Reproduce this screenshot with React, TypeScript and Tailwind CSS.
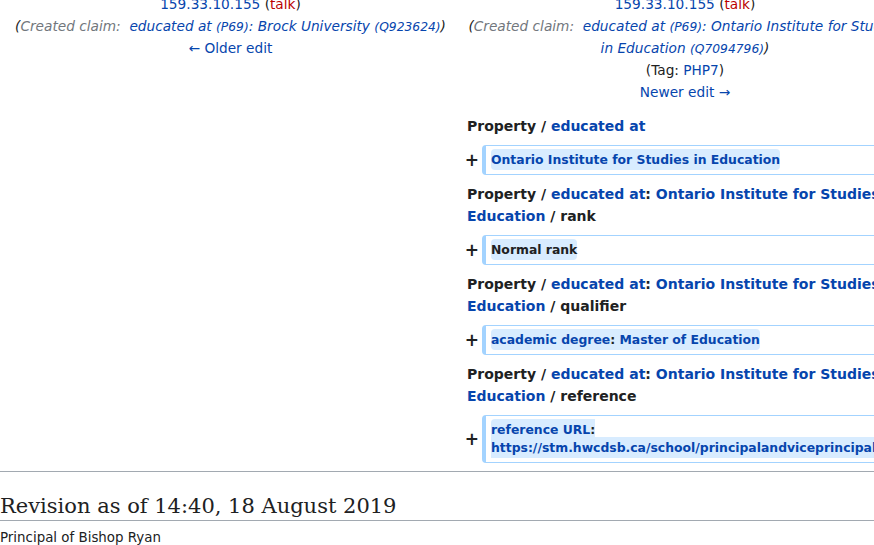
const link = "text-[#0645ad]";

const Id = ({ children }: { children: string }) => (
  <span className="text-[12.3px] leading-none">({children})</span>
);

const HeaderCell = ({ right }: { right?: boolean }) => {
  return (
    <div className="text-center text-[13.7px] leading-[22px]">
      <div>
        <a className={link}>159.33.10.155</a> (<a className="text-[#ba0000]">talk</a>)
      </div>
      <div className="italic">
        (<span className="whitespace-pre text-[#72777d]">Created claim:  </span>
        <a className={link}>
          educated at <Id>P69</Id>:{" "}
          {right ? "Ontario Institute for Studies in Education" : "Brock University"}{" "}
          <Id>{right ? "Q7094796" : "Q923624"}</Id>
        </a>
        )
      </div>
      {right ? (
        <>
          <div>
            (Tag: <a className={link}>PHP7</a>)
          </div>
          <div>
            <a className={link}>Newer edit →</a>
          </div>
        </>
      ) : (
        <div>
          <a className={link}>← Older edit</a>
        </div>
      )}
    </div>
  );
};

const RowTitle = ({ tail }: { tail?: string }) => (
  <div className="pl-[5px] text-[14px] font-bold leading-[22px]">
    Property / <a className={link}>educated at</a>
    {tail && (
      <>
        : <a className={link}>Ontario Institute for Studies in Education</a> / {tail}
      </>
    )}
  </div>
);

const Added = ({ children }: { children: React.ReactNode }) => (
  <div className="flex items-center">
    <span className="w-[17px] text-right text-[17px] font-bold leading-[20px]">+</span>
    <div className="ml-[3px] w-[422px] rounded-[4px] border border-l-4 border-[#a3d3ff] px-[5px] py-[5px] text-[12.4px] leading-[18px]">
      <span className="rounded-[4px] bg-[#d8ecff] py-[3px] font-bold">{children}</span>
    </div>
  </div>
);

export default function App() {
  return (
    <div className="h-[545px] w-[874px] overflow-hidden bg-white font-['DejaVu_Sans',sans-serif] text-[#202122]">
      <div className="-mt-[7px] w-[904px]">
        {/* revision headers */}
        <div className="flex items-start">
          <div className="ml-[11px] w-[439px]">
            <HeaderCell />
          </div>
          <div className="ml-[16px] w-[438px]">
            <HeaderCell right />
          </div>
        </div>

        {/* diff rows */}
        <div className="ml-[462px] mt-[12px] flex flex-col gap-2">
          <RowTitle />
          <Added>
            <a className={link}>Ontario Institute for Studies in Education</a>
          </Added>
          <RowTitle tail="rank" />
          <Added>Normal rank</Added>
          <RowTitle tail="qualifier" />
          <Added>
            <a className={link}>academic degree</a>: <a className={link}>Master of Education</a>
          </Added>
          <RowTitle tail="reference" />
          <Added>
            <a className={link}>reference URL</a>:{" "}
            <a className={`${link} whitespace-nowrap`}>
              https://stm.hwcdsb.ca/school/principalandviceprincipal/Pages/default.aspx
            </a>
          </Added>
        </div>
      </div>

      <div className="mt-[8px] h-px bg-[#a2a9b1]" />

      <h2 className="mt-[21px] border-b border-[#a2a9b1] font-['DejaVu_Serif',serif] text-[21px] leading-[27px]">
        Revision as of 14:40, 18 August 2019
      </h2>
      <p className="mt-[7px] text-[13.4px] leading-[20px]">Principal of Bishop Ryan</p>
    </div>
  );
}
